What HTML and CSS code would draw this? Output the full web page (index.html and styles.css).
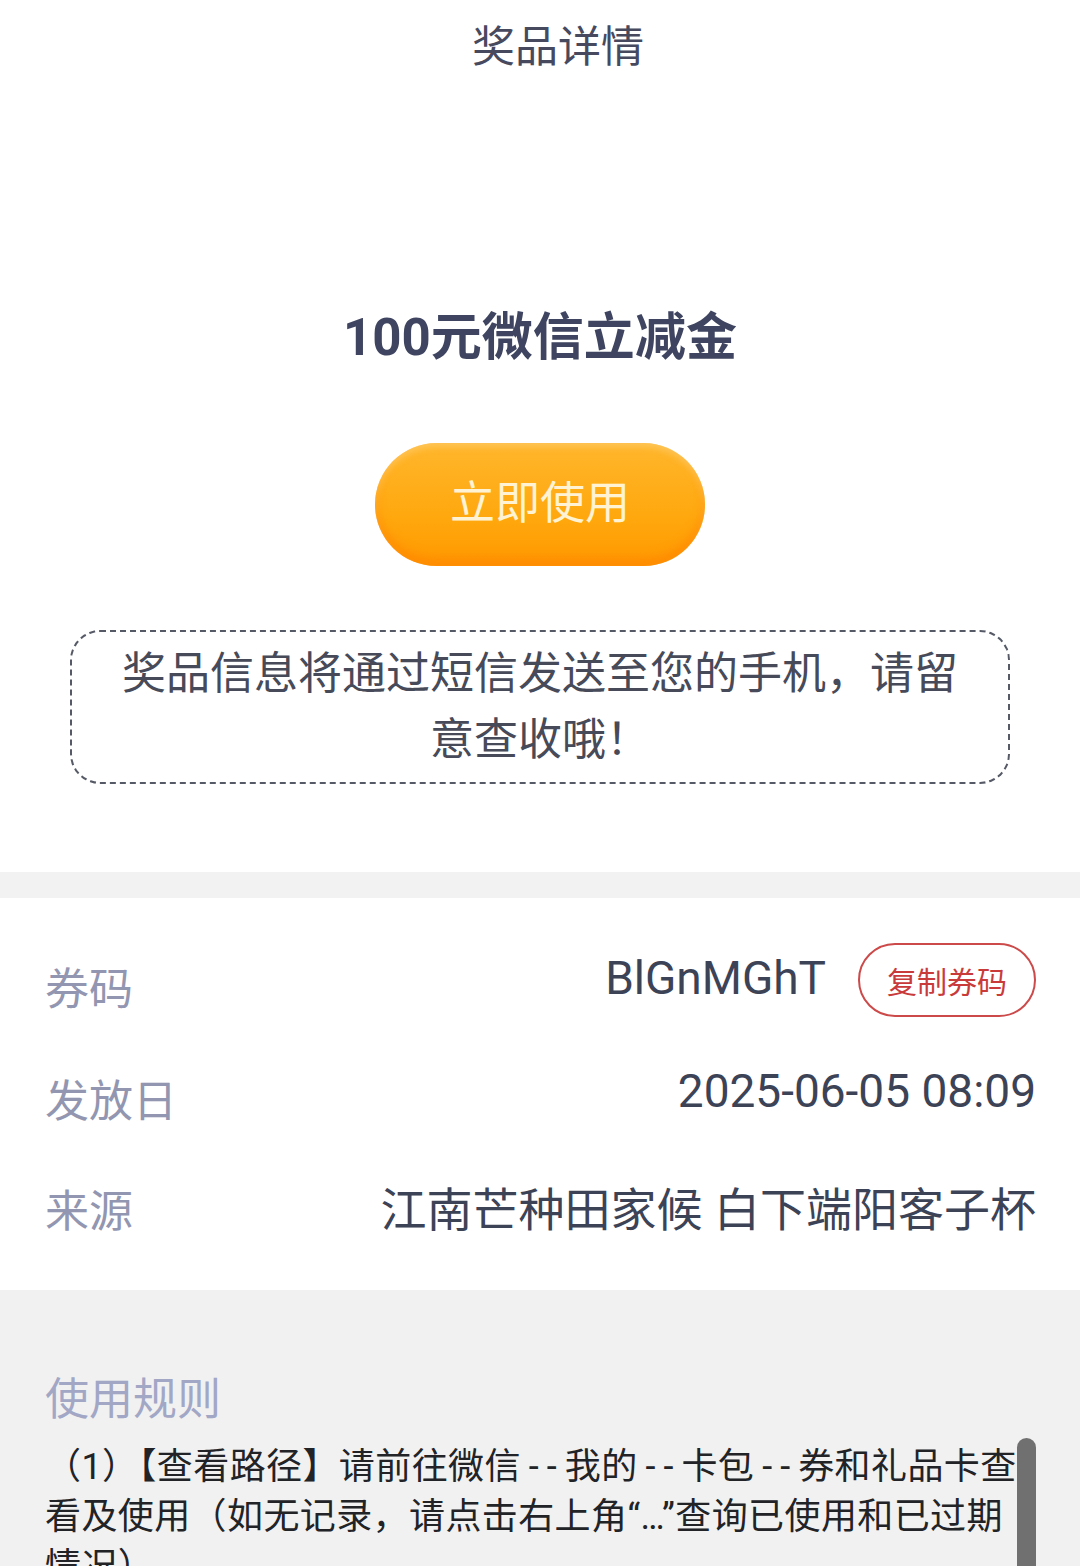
FILE: index.html
```html
<!DOCTYPE html>
<html lang="zh-CN">
<head>
<meta charset="utf-8">
<title>奖品详情</title>
<link rel="stylesheet" href="styles.css">
</head>
<body>
<header class="topbar">奖品详情</header>
<section class="prize">
  <h1 class="prize-name">100元微信立减金</h1>
  <button class="use-btn">立即使用</button>
  <div class="notice">奖品信息将通过短信发送至您的手机，请留意查收哦！</div>
</section>
<div class="band"></div>
<section class="info">
  <div class="row">
    <span class="label">券码</span>
    <span class="value-wrap"><span class="value code">BlGnMGhT</span><button class="copy-btn">复制券码</button></span>
  </div>
  <div class="row">
    <span class="label">发放日</span>
    <span class="value">2025-06-05 08:09</span>
  </div>
  <div class="row">
    <span class="label">来源</span>
    <span class="value">江南芒种田家候 白下端阳客子杯</span>
  </div>
</section>
<section class="rules">
  <h2 class="rules-title">使用规则</h2>
  <p class="rules-text">（1）【查看路径】请前往微信<span class="dash">--</span>我的<span class="dash">--</span>卡包<span class="dash">--</span>券和礼品卡查看及使用（如无记录，请点击右上角“…”查询已使用和已过期情况）</p>
  <p class="rules-text">（2）【使用说明】立减金可在微信支付时自动抵扣。</p>
  <div class="scrollbar"></div>
</section>
</body>
</html>
```
FILE: styles.css
```css
* { box-sizing: border-box; }
html, body { margin: 0; padding: 0; }
body {
  background: #ffffff;
  font-family: Roboto, "Noto Sans CJK SC", "Noto Sans", sans-serif;
  color: #3d4356;
  width: 1080px;
  overflow: hidden;
}
.topbar {
  height: 95px;
  line-height: 95px;
  text-align: center;
  font-size: 43px;
  color: #474a5e;
  padding-left: 36px;
}
.prize {
  display: flex;
  flex-direction: column;
  align-items: center;
  padding: 208px 70px 88px;
}
.prize-name {
  margin: 0;
  font-size: 51px;
  line-height: 70px;
  font-weight: 700;
  color: #3f4560;
}
.use-btn {
  margin-top: 70px;
  width: 330px;
  height: 123px;
  border: none;
  border-radius: 62px;
  background: linear-gradient(180deg, #ffb62c 0%, #ffa80e 60%, #ff9900 100%);
  box-shadow: inset 0 -8px 10px rgba(255, 130, 0, 0.55), inset 0 4px 6px rgba(255, 210, 120, 0.6);
  color: #fff3d4;
  font-family: "Noto Sans CJK SC", sans-serif;
  font-size: 45px;
  padding: 0 0 10px;
}
.notice {
  margin-top: 64px;
  width: 940px;
  height: 154px;
  border: 2px dashed #555a66;
  border-radius: 30px;
  padding: 9px 40px;
  text-align: center;
  font-size: 44px;
  line-height: 66px;
  color: #474a58;
}
.band {
  height: 26px;
  background: #f2f2f2;
}
.info {
  padding: 25px 44px 25px 45px;
}
.row {
  height: 114px;
  display: flex;
  align-items: center;
  justify-content: space-between;
}
.label {
  font-size: 44px;
  color: #9296b0;
  padding-top: 12px;
}
.row:nth-child(2) .label { padding-top: 8px; }
.row:nth-child(3) .label { padding-top: 0; }
.value {
  font-size: 46px;
  color: #3d4356;
}
.row:nth-child(2) .value { padding-bottom: 6px; }
.row:nth-child(3) .value { padding-bottom: 4px; }
.value-wrap {
  display: flex;
  align-items: center;
}
.code { padding-bottom: 4px; }
.copy-btn {
  margin-left: 32px;
  width: 178px;
  height: 74px;
  border: 2px solid #cc4a4a;
  border-radius: 37px;
  background: #ffffff;
  color: #c93b3b;
  font-family: "Noto Sans CJK SC", sans-serif;
  font-size: 30px;
  padding: 0;
}
.rules {
  position: relative;
  background: #f1f1f1;
  padding: 80px 45px 40px;
  min-height: 400px;
}
.rules-title {
  margin: 0 0 12px;
  font-size: 44px;
  line-height: 60px;
  font-weight: 400;
  color: #a2a7c6;
}
.rules-text {
  margin: 0;
  font-size: 36px;
  line-height: 50px;
  letter-spacing: 0.4px;
  color: #222326;
}
.dash {
  padding-left: 8px;
  letter-spacing: 8px;
}
.scrollbar {
  position: absolute;
  right: 44px;
  top: 148px;
  width: 19px;
  height: 260px;
  border-radius: 10px;
  background: #707070;
}
```
